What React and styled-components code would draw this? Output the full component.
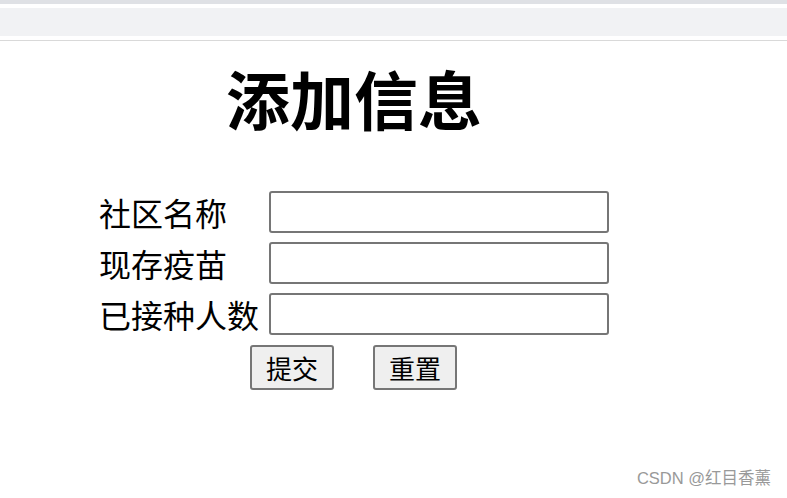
import React from "react";
import styled, { createGlobalStyle } from "styled-components";

const Global = createGlobalStyle`
  body {
    margin: 0;
    background: #fff;
    font-family: "Noto Sans CJK SC", "Liberation Sans", sans-serif;
  }
`;

export const Page = styled.div`
  position: relative;
  width: 787px;
  height: 498px;
  overflow: hidden;
`;

export const Chrome = styled.div`
  border-top: 4px solid #dfe1e5;
  padding: 4px 0;
  border-bottom: 1px solid #d9d9d9;
`;

export const AddressBar = styled.div`
  height: 28px;
  background: #f1f2f4;
`;

export const Title = styled.h1`
  margin: 18px 0 0 226px;
  font-size: 64px;
  line-height: 76px;
  font-weight: 700;
  color: #000;
`;

export const Form = styled.form`
  display: grid;
  grid-template-columns: 170px 340px;
  row-gap: 9px;
  margin: 56px 0 0 99px;
`;

export const Label = styled.label`
  font-size: 32px;
  line-height: 42px;
  color: #000;
  white-space: nowrap;
`;

export const Input = styled.input`
  box-sizing: border-box;
  width: 340px;
  height: 42px;
  border: 2px solid #767676;
  border-radius: 3px;
  background: #fff;
`;

export const Buttons = styled.div`
  grid-column: 1 / span 2;
  display: flex;
  gap: 39px;
  padding-left: 151px;
  margin-top: 1px;
`;

export const Button = styled.button`
  box-sizing: border-box;
  width: 84px;
  height: 45px;
  border: 2px solid #767676;
  border-radius: 3px;
  background: #efefef;
  font-family: "Noto Sans CJK SC", sans-serif;
  font-size: 26px;
  line-height: 1;
  color: #000;
  padding: 0;
`;

export const Mark = styled.div`
  position: absolute;
  right: 16px;
  bottom: 9px;
  font-family: "Liberation Sans", "Noto Sans CJK SC", sans-serif;
  font-size: 16.5px;
  color: #999;
`;

const fields = ["社区名称", "现存疫苗", "已接种人数"];

export default function App() {
  return (
    <Page>
      <Global />
      <Chrome>
        <AddressBar />
      </Chrome>
      <Title>添加信息</Title>
      <Form onSubmit={(e) => e.preventDefault()}>
        {fields.map((f) => (
          <React.Fragment key={f}>
            <Label>{f}</Label>
            <Input type="text" />
          </React.Fragment>
        ))}
        <Buttons>
          <Button type="submit">提交</Button>
          <Button type="reset">重置</Button>
        </Buttons>
      </Form>
      <Mark>CSDN @红目香薰</Mark>
    </Page>
  );
}
